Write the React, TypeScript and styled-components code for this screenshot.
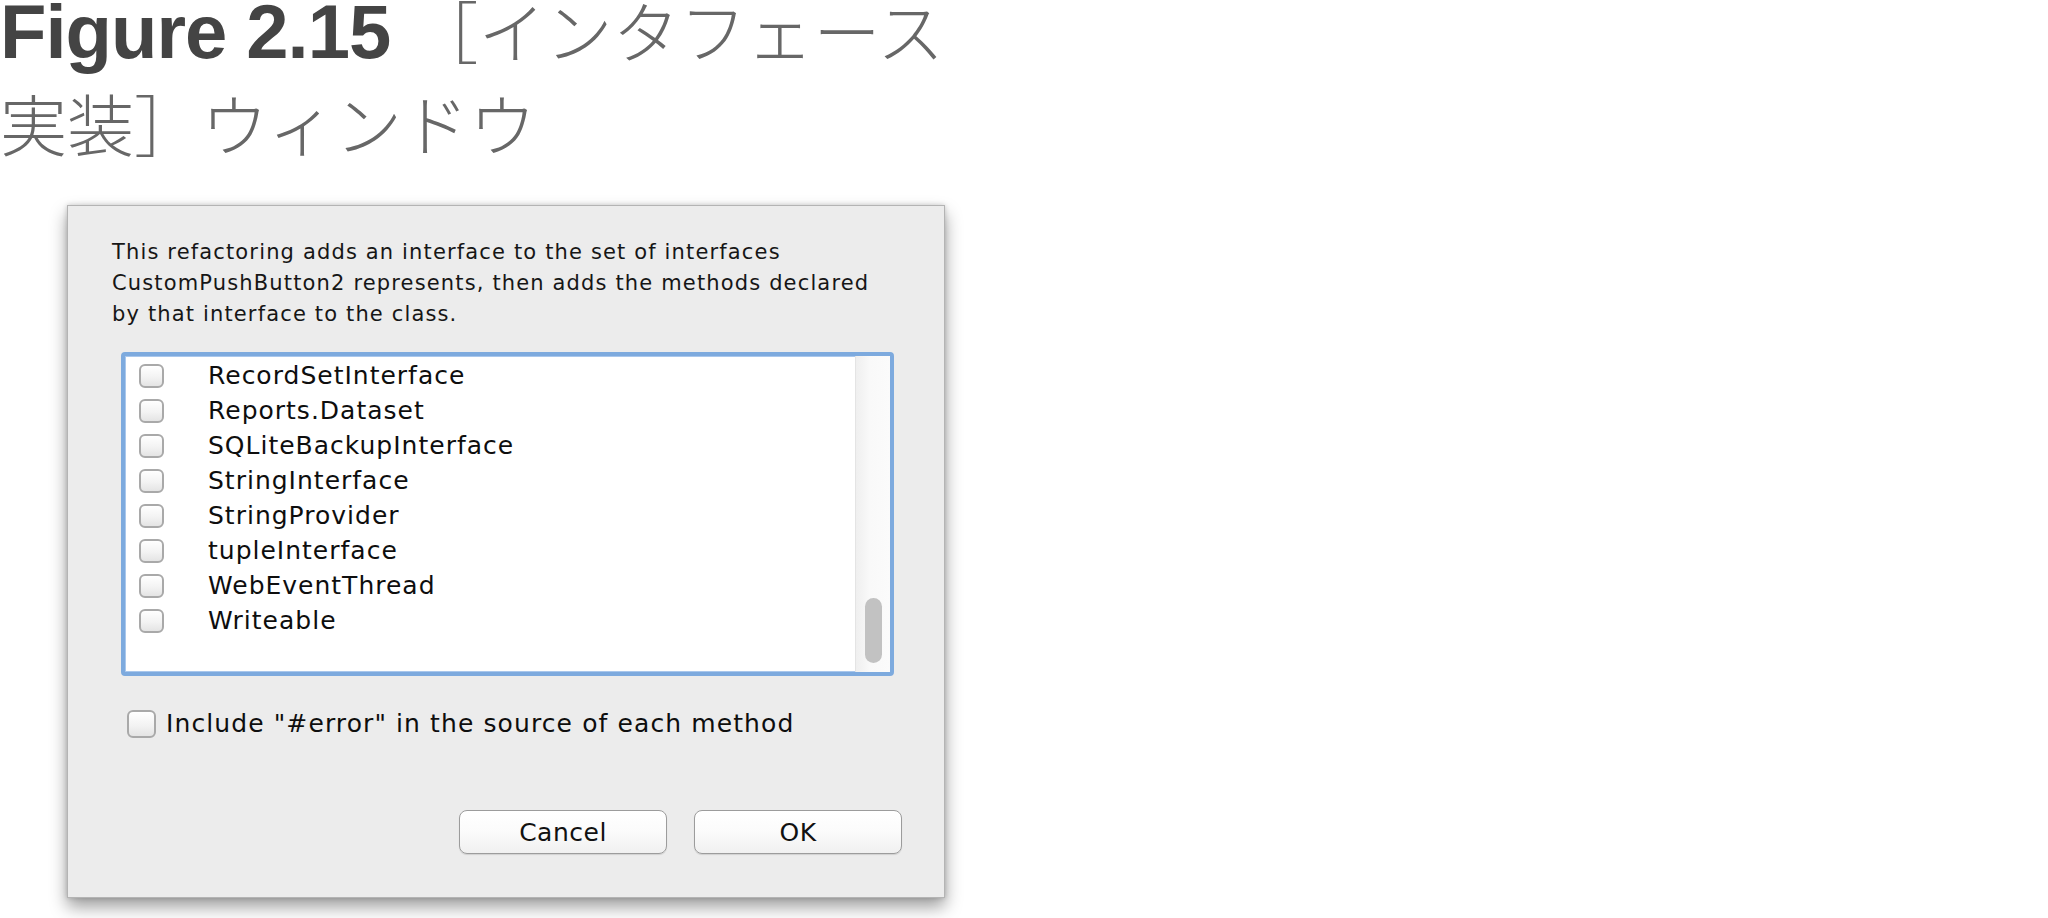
import React from "react";
import styled, { createGlobalStyle } from "styled-components";

const Global = createGlobalStyle`
  html, body { margin: 0; padding: 0; background: #ffffff; }
  body { width: 2048px; height: 918px; overflow: hidden; }
`;

const Page = styled.div`
  display: flex;
  flex-direction: column;
  align-items: flex-start;
`;

const Title = styled.h1`
  margin: 0;
  font-family: "Liberation Sans", Arial, sans-serif;
  font-size: 76px;
  font-weight: 400;
`;

const TitleLine = styled.div<{ $lh: number }>`
  line-height: ${(p) => p.$lh}px;
  white-space: nowrap;
`;

const TitleLatin = styled.span`
  font-weight: 700;
  color: #444444;
  letter-spacing: -1px;
`;

const TitleJp = styled.span`
  font-family: "Noto Sans CJK JP", "Noto Sans CJK SC", sans-serif;
  font-size: 67px;
  font-weight: 300;
  color: #676767;
`;

const Dialog = styled.div`
  box-sizing: border-box;
  margin: 19px 0 0 67px;
  width: 878px;
  height: 693px;
  background: #ececec;
  border: 1px solid #b4b4b4;
  box-shadow: 0 9px 16px rgba(0, 0, 0, 0.38), 0 0 5px rgba(0, 0, 0, 0.18);
  display: flex;
  flex-direction: column;
  padding: 31px 42px 43px 44px;
  font-family: "DejaVu Sans", "Liberation Sans", sans-serif;
  color: #161616;
`;

const Description = styled.p`
  margin: 0;
  font-size: 21px;
  line-height: 31px;
  letter-spacing: 1.15px;
  white-space: nowrap;
`;

const ListBox = styled.div`
  box-sizing: border-box;
  margin: 22px 8px 0 9px;
  height: 324px;
  border: 4px solid #7daade;
  border-radius: 4px;
  box-shadow: inset 0 0 0 1px #a9c7ec;
  background: #ffffff;
  display: flex;
`;

const Rows = styled.div`
  flex: 1;
  display: flex;
  flex-direction: column;
  padding: 2px 0 0 14px;
`;

const Row = styled.div`
  height: 35px;
  display: flex;
  align-items: center;
`;

const Check = styled.span<{ $size?: number }>`
  box-sizing: border-box;
  flex: none;
  width: ${(p) => p.$size ?? 25}px;
  height: ${(p) => (p.$size ?? 25) - 1}px;
  border: 2px solid #a9a9a9;
  border-radius: 6px;
  background: linear-gradient(#ffffff 0%, #f3f3f3 55%, #e4e4e4 100%);
  box-shadow: inset 0 1px 0 #ffffff;
`;

const ItemLabel = styled.span`
  margin-left: 44px;
  font-size: 25px;
  letter-spacing: 1px;
  color: #0e0e0e;
`;

const Track = styled.div`
  flex: none;
  width: 35px;
  display: flex;
  flex-direction: column;
  justify-content: flex-end;
  align-items: center;
  padding-bottom: 9px;
  box-sizing: border-box;
  background: linear-gradient(90deg, #efefef 0%, #f9f9f9 40%, #fbfbfb 100%);
  border-left: 1px solid #e4e4e4;
`;

const Thumb = styled.div`
  width: 17px;
  height: 65px;
  border-radius: 9px;
  background: #c2c2c2;
`;

const IncludeRow = styled.label`
  display: flex;
  align-items: center;
  margin: 33px 0 0 15px;
`;

const IncludeLabel = styled.span`
  margin-left: 10px;
  font-size: 25px;
  letter-spacing: 1.1px;
  color: #0e0e0e;
`;

const Spacer = styled.div`
  flex: 1;
`;

const ButtonRow = styled.div`
  display: flex;
  justify-content: flex-end;
  gap: 27px;
`;

const Button = styled.button`
  box-sizing: border-box;
  width: 208px;
  height: 44px;
  border: 1px solid #9c9c9c;
  border-radius: 8px;
  background: linear-gradient(#ffffff 0%, #fbfbfb 50%, #f0f0f0 100%);
  box-shadow: 0 1px 1px rgba(0, 0, 0, 0.12);
  font-family: "DejaVu Sans", "Liberation Sans", sans-serif;
  font-size: 25px;
  letter-spacing: 0.5px;
  color: #111111;
  padding: 0;
`;

const items = [
  "RecordSetInterface",
  "Reports.Dataset",
  "SQLiteBackupInterface",
  "StringInterface",
  "StringProvider",
  "tupleInterface",
  "WebEventThread",
  "Writeable",
];

export default function App() {
  return (
    <Page>
      <Global />
      <Title>
        <TitleLine $lh={58}>
          <TitleLatin>Figure 2.15</TitleLatin> <TitleJp>［インタフェース</TitleJp>
        </TitleLine>
        <TitleLine $lh={122}>
          <TitleJp>実装］ウィンドウ</TitleJp>
        </TitleLine>
      </Title>
      <Dialog>
        <Description>
          This refactoring adds an interface to the set of interfaces
          <br />
          CustomPushButton2 represents, then adds the methods declared
          <br />
          by that interface to the class.
        </Description>
        <ListBox>
          <Rows>
            {items.map((it) => (
              <Row key={it}>
                <Check />
                <ItemLabel>{it}</ItemLabel>
              </Row>
            ))}
          </Rows>
          <Track>
            <Thumb />
          </Track>
        </ListBox>
        <IncludeRow>
          <Check $size={29} />
          <IncludeLabel>Include "#error" in the source of each method</IncludeLabel>
        </IncludeRow>
        <Spacer />
        <ButtonRow>
          <Button>Cancel</Button>
          <Button>OK</Button>
        </ButtonRow>
      </Dialog>
    </Page>
  );
}
